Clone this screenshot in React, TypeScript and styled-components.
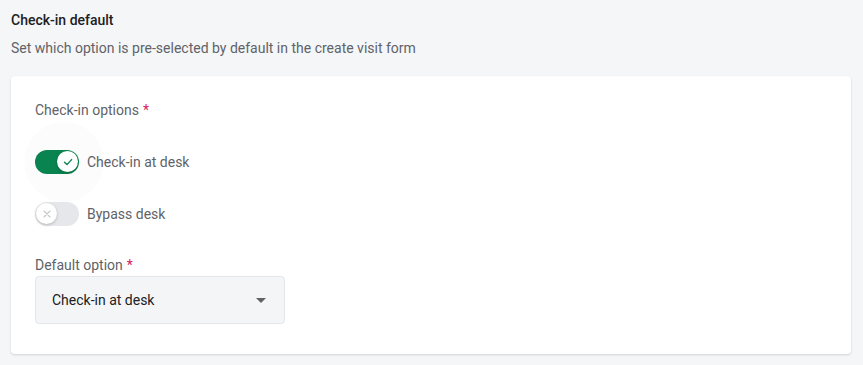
import React from "react";
import styled, { createGlobalStyle } from "styled-components";

const GlobalStyle = createGlobalStyle`
  html, body {
    margin: 0;
    padding: 0;
    background: #f5f6f8;
    font-family: Roboto, "Liberation Sans", Arial, sans-serif;
    -webkit-font-smoothing: antialiased;
  }
  * { box-sizing: border-box; }
`;

const Page = styled.div`
  padding: 10px 12px 11px 11px;
  display: flex;
  flex-direction: column;
`;

const Title = styled.h2`
  margin: 0;
  font-size: 14px;
  line-height: 20px;
  font-weight: 500;
  color: #202124;
`;

const Subtitle = styled.p`
  margin: 8px 0 0;
  font-size: 14px;
  line-height: 20px;
  color: #5f6368;
`;

const Card = styled.section`
  margin-top: 18px;
  background: #fff;
  border-radius: 4px;
  box-shadow: 0 1px 2px rgba(60, 64, 67, 0.12), 0 1px 3px rgba(60, 64, 67, 0.08);
  padding: 24px 24px 30px;
  display: flex;
  flex-direction: column;
`;

const FieldLabel = styled.div<{ $gap?: number }>`
  font-size: 14px;
  line-height: 20px;
  color: #5f6368;
  margin-top: ${(p) => p.$gap ?? 0}px;
`;

const Required = styled.span`
  color: #d81b60;
  margin-left: 4px;
`;

const ToggleRow = styled.label<{ $gap: number }>`
  display: flex;
  align-items: center;
  gap: 8px;
  margin-top: ${(p) => p.$gap}px;
  font-size: 14px;
  line-height: 24px;
  color: #5f6368;
  cursor: pointer;
`;

const Track = styled.span<{ $on: boolean }>`
  position: relative;
  width: 44px;
  height: 24px;
  border-radius: 12px;
  background: ${(p) => (p.$on ? "#0a8550" : "#e6e7ea")};
  flex: none;
  ${(p) =>
    p.$on &&
    `&::before {
      content: "";
      position: absolute;
      left: -11px;
      top: -28px;
      width: 80px;
      height: 80px;
      border-radius: 50%;
      background: rgba(0,0,0,0.012);
      pointer-events: none;
    }`}
`;

const Knob = styled.span<{ $on: boolean }>`
  position: absolute;
  top: 1px;
  left: ${(p) => (p.$on ? "22px" : "1px")};
  width: 21px;
  height: 21px;
  border-radius: 50%;
  background: #fff;
  display: flex;
  align-items: center;
  justify-content: center;
  box-shadow: 0 1px 3px rgba(0, 0, 0, 0.22);
`;

const Select = styled.div`
  margin-top: 1px;
  width: 250px;
  height: 48px;
  background: #f4f5f7;
  border: 1px solid #e4e6ea;
  border-radius: 4px;
  display: flex;
  align-items: center;
  justify-content: space-between;
  padding: 0 18px 0 16px;
  font-size: 14px;
  color: #202124;
`;

const Caret = styled.span`
  width: 0;
  height: 0;
  border-left: 5px solid transparent;
  border-right: 5px solid transparent;
  border-top: 5px solid #5f6368;
`;

function Toggle({ on }: { on: boolean }) {
  return (
    <Track $on={on}>
      <Knob $on={on}>
        {on ? (
          <svg width="12" height="12" viewBox="0 0 12 12" fill="none">
            <path d="M2.5 6.2 L5 8.6 L9.6 3.6" stroke="#0a8550" strokeWidth="1.4" strokeLinecap="round" strokeLinejoin="round" />
          </svg>
        ) : (
          <svg width="10" height="10" viewBox="0 0 10 10" fill="none">
            <path d="M2 2 L8 8 M8 2 L2 8" stroke="#c4c6ca" strokeWidth="1.1" strokeLinecap="round" />
          </svg>
        )}
      </Knob>
    </Track>
  );
}

export default function App() {
  return (
    <>
      <GlobalStyle />
      <Page>
        <Title>Check-in default</Title>
        <Subtitle>Set which option is pre-selected by default in the create visit form</Subtitle>
        <Card>
          <FieldLabel>
            Check-in options<Required>*</Required>
          </FieldLabel>
          <ToggleRow $gap={30}>
            <Toggle on />
            Check-in at desk
          </ToggleRow>
          <ToggleRow $gap={28}>
            <Toggle on={false} />
            Bypass desk
          </ToggleRow>
          <FieldLabel $gap={29}>
            Default option<Required>*</Required>
          </FieldLabel>
          <Select>
            Check-in at desk
            <Caret />
          </Select>
        </Card>
      </Page>
    </>
  );
}
